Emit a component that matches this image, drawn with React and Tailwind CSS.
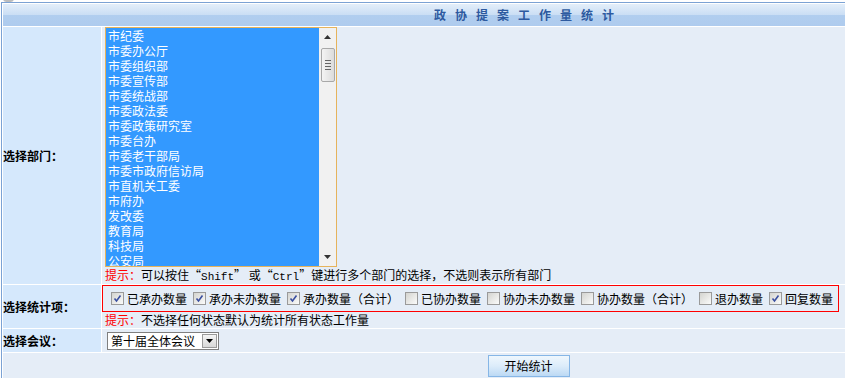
import React from "react";

const depts = [
  "市纪委",
  "市委办公厅",
  "市委组织部",
  "市委宣传部",
  "市委统战部",
  "市委政法委",
  "市委政策研究室",
  "市委台办",
  "市委老干部局",
  "市委市政府信访局",
  "市直机关工委",
  "市府办",
  "发改委",
  "教育局",
  "科技局",
  "公安局",
];

const items = [
  { label: "已承办数量", checked: true },
  { label: "承办未办数量", checked: true },
  { label: "承办数量（合计）", checked: true },
  { label: "已协办数量", checked: false },
  { label: "协办未办数量", checked: false },
  { label: "协办数量（合计）", checked: false },
  { label: "退办数量", checked: false },
  { label: "回复数量", checked: true },
];

function CheckBox({ checked }) {
  return (
    <span className="w-[13px] h-[13px] shrink-0 border border-[#9a9a9a] bg-[linear-gradient(135deg,#d4d4d0,#fbfbfa)] flex items-center justify-center">
      {checked && (
        <svg width="9" height="9" viewBox="0 0 9 9">
          <path d="M1.5 4.5 L3.5 7 L7.5 1.5" fill="none" stroke="#3a4fa0" strokeWidth="1.6" />
        </svg>
      )}
    </span>
  );
}

function Scrollbar() {
  return (
    <div className="w-[17px] h-full bg-[#f1f1f1] flex flex-col items-center">
      <div className="h-[18px] w-full flex items-center justify-center">
        <svg width="7" height="4" viewBox="0 0 7 4">
          <path d="M0 4 L3.5 0 L7 4 Z" fill="#333" />
        </svg>
      </div>
      <div className="w-[14px] h-[34px] mt-[2px] rounded-[2px] border border-[#a8a8a8] bg-[linear-gradient(to_right,#f4f4f4,#dcdcdc)] flex flex-col items-center justify-center gap-[2px]">
        <span className="w-[6px] h-[1px] bg-[#666]" />
        <span className="w-[6px] h-[1px] bg-[#666]" />
        <span className="w-[6px] h-[1px] bg-[#666]" />
        <span className="w-[6px] h-[1px] bg-[#666]" />
      </div>
      <div className="flex-1" />
      <div className="h-[18px] w-full flex items-center justify-center">
        <svg width="7" height="4" viewBox="0 0 7 4">
          <path d="M0 0 L3.5 4 L7 0 Z" fill="#333" />
        </svg>
      </div>
    </div>
  );
}

function Hint({ children }) {
  return (
    <div className="ml-[3px] leading-[16px] text-black whitespace-nowrap">
      <span className="text-[#ff0000]">提示：</span>
      {children}
    </div>
  );
}

export default function App() {
  return (
    <div className="w-[845px] h-[378px] overflow-hidden bg-white relative font-['Noto_Sans_CJK_SC',sans-serif] text-[12px]">
      <div className="absolute left-[3px] top-[-5px] w-[11px] h-[7px] rounded-full bg-[#bcbcbc]" />
      <div className="mt-[2px] ml-[1px] w-[1053px] h-[400px] border-l border-t border-[#7ba2d4] bg-white pl-[1px] pt-[1px] flex flex-col gap-[1px]">
        <div className="h-[22px] shrink-0 bg-[linear-gradient(#e3eefa,#cadef4_50%,#b1ceef_50%,#aecbee)] flex items-center justify-center">
          <span className="font-bold text-[#2d5aa0] tracking-[9px]">政协提案工作量统计</span>
        </div>

        <div className="h-[257px] shrink-0 flex gap-[1px]">
          <div className="w-[98px] bg-[#d5e8fc] flex items-center font-bold">选择部门：</div>
          <div className="flex-1 bg-[#e5edf7] flex flex-col">
            <div className="ml-[3px] w-[232px] h-[240px] border border-[#e6b35b] bg-[#3399ff] flex">
              <div className="flex-1 overflow-hidden pl-[2px] text-white leading-[15px]">
                {depts.map((d) => (
                  <div key={d}>{d}</div>
                ))}
              </div>
              <Scrollbar />
            </div>
            <div className="h-[17px] flex items-center">
              <Hint>
                可以按住“<span className="font-['Liberation_Mono',monospace] text-[11px]">Shift</span>” 或“
                <span className="font-['Liberation_Mono',monospace] text-[11px]">Ctrl</span>”键进行多个部门的选择，不选则表示所有部门
              </Hint>
            </div>
          </div>
        </div>

        <div className="h-[43px] shrink-0 flex gap-[1px]">
          <div className="w-[98px] bg-[#d5e8fc] flex items-center font-bold">选择统计项：</div>
          <div className="flex-1 bg-[#e5edf7] flex flex-col">
            <div className="w-[737px] h-[27px] border border-[#ff0000] flex items-center pl-[8px]">
              {items.map((it, i) => (
                <div key={it.label} className={`flex items-center gap-[3px] ${i === 0 ? "" : "ml-[6px]"}`}>
                  <CheckBox checked={it.checked} />
                  <span className="whitespace-nowrap">{it.label}</span>
                </div>
              ))}
            </div>
            <div className="h-[16px] flex items-center">
              <Hint>不选择任何状态默认为统计所有状态工作量</Hint>
            </div>
          </div>
        </div>

        <div className="h-[23px] shrink-0 flex gap-[1px]">
          <div className="w-[98px] bg-[#d5e8fc] flex items-center font-bold">选择会议：</div>
          <div className="flex-1 bg-[#e5edf7] pt-[3px]">
            <div className="ml-[5px] w-[112px] h-[18px] border border-[#7f7f7f] bg-white flex items-center">
              <span className="flex-1 pl-[3px] leading-[16px]">第十届全体会议</span>
              <span className="w-[15px] h-[14px] mr-[1px] border border-[#9a9a9a] bg-[linear-gradient(#f4f4f4,#d8d8d8)] flex items-center justify-center">
                <svg width="7" height="4" viewBox="0 0 7 4">
                  <path d="M0 0 L3.5 4 L7 0 Z" fill="#000" />
                </svg>
              </span>
            </div>
          </div>
        </div>

        <div className="flex-1 bg-[#e5edf7] flex justify-center pt-[2px]">
          <button className="w-[82px] h-[22px] border border-[#86b6e6] bg-[linear-gradient(#eff7fd,#dcecfa_50%,#bcd9f4)] text-black text-[12px] leading-[20px]">
            开始统计
          </button>
        </div>
      </div>
    </div>
  );
}
